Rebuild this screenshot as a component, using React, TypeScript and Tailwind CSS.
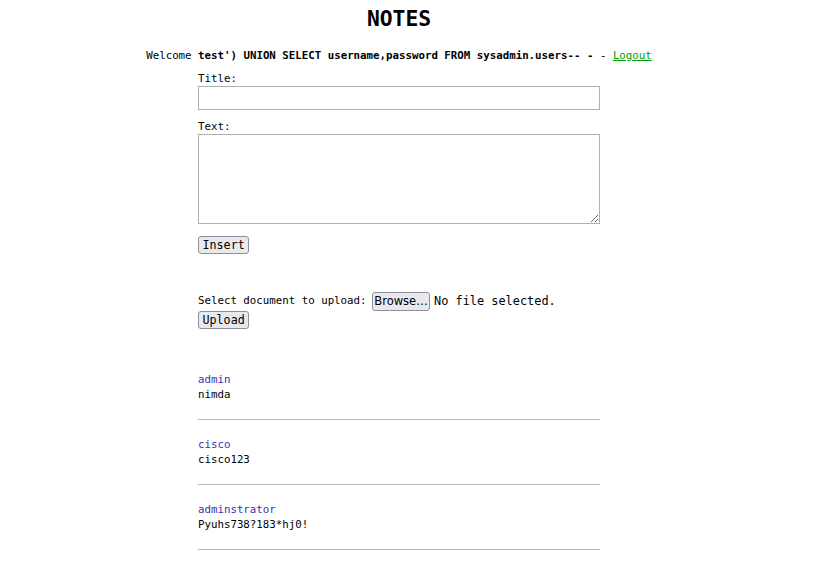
import React from "react";

const mono = { fontFamily: '"DejaVu Sans Mono", monospace' };

const notes = [
  { t: "admin", b: "nimda" },
  { t: "cisco", b: "cisco123" },
  { t: "adminstrator", b: "Pyuhs738?183*hj0!" },
];

export default function App() {
  return (
    <div className="w-[835px] h-[561px] bg-white text-black overflow-hidden" style={mono}>
      <div className="w-[798px] flex flex-col items-center">
        <h1 className="pt-[7px] text-[21.33px] font-bold leading-[24.8px]">NOTES</h1>
        <div className="mt-[18.5px] text-[10.78px] leading-[12.4px] whitespace-pre">
          Welcome <b>test') UNION SELECT username,password FROM sysadmin.users-- -</b> - <a href="#" className="text-[#00a000] underline">Logout</a>
        </div>
        <div className="w-[402px] mt-[10.5px] flex flex-col text-[10.78px] leading-[12.4px]">
          <label>Title:</label>
          <input className="mt-[0.5px] h-[24px] w-[402px] border border-[#b0b0b0] bg-white" />
          <label className="mt-[11px]">Text:</label>
          <textarea className="mt-[0.5px] h-[90px] w-[402px] border border-[#b0b0b0] bg-white resize" />
          <div className="mt-[11.5px]">
            <button className="h-[18px] px-[3.5px] border border-[#8f8f9d] rounded-[3px] bg-[#e9e9ed] text-[11.7px] leading-[14px]">Insert</button>
          </div>
          <div className="mt-[38px] flex items-center h-[19px]">
            <span className="whitespace-pre">Select document to upload: </span>
            <span className="-ml-[1px] h-[19px] w-[58px] flex items-center justify-center border border-[#8f8f9d] rounded-[3px] bg-[#e9e9ed] text-[11.5px]" style={{ fontFamily: '"DejaVu Sans", sans-serif' }}>Browse…</span>
            <span className="ml-[4px] text-[11.9px]">No file selected.</span>
          </div>
          <div className="mt-0">
            <button className="h-[18px] px-[3.5px] border border-[#8f8f9d] rounded-[3px] bg-[#e9e9ed] text-[11.7px] leading-[14px]">Upload</button>
          </div>
          <div className="mt-[43px] flex flex-col">
            {notes.map((n) => (
              <div key={n.t} className="flex flex-col">
                <div className="leading-[15px] text-[#3535a8]">{n.t}</div>
                <div className="leading-[15px]">{n.b}</div>
                <div className="mt-[17px] h-px bg-[#b8b8b8]" />
                <div className="h-[17px]" />
              </div>
            ))}
          </div>
        </div>
      </div>
    </div>
  );
}
